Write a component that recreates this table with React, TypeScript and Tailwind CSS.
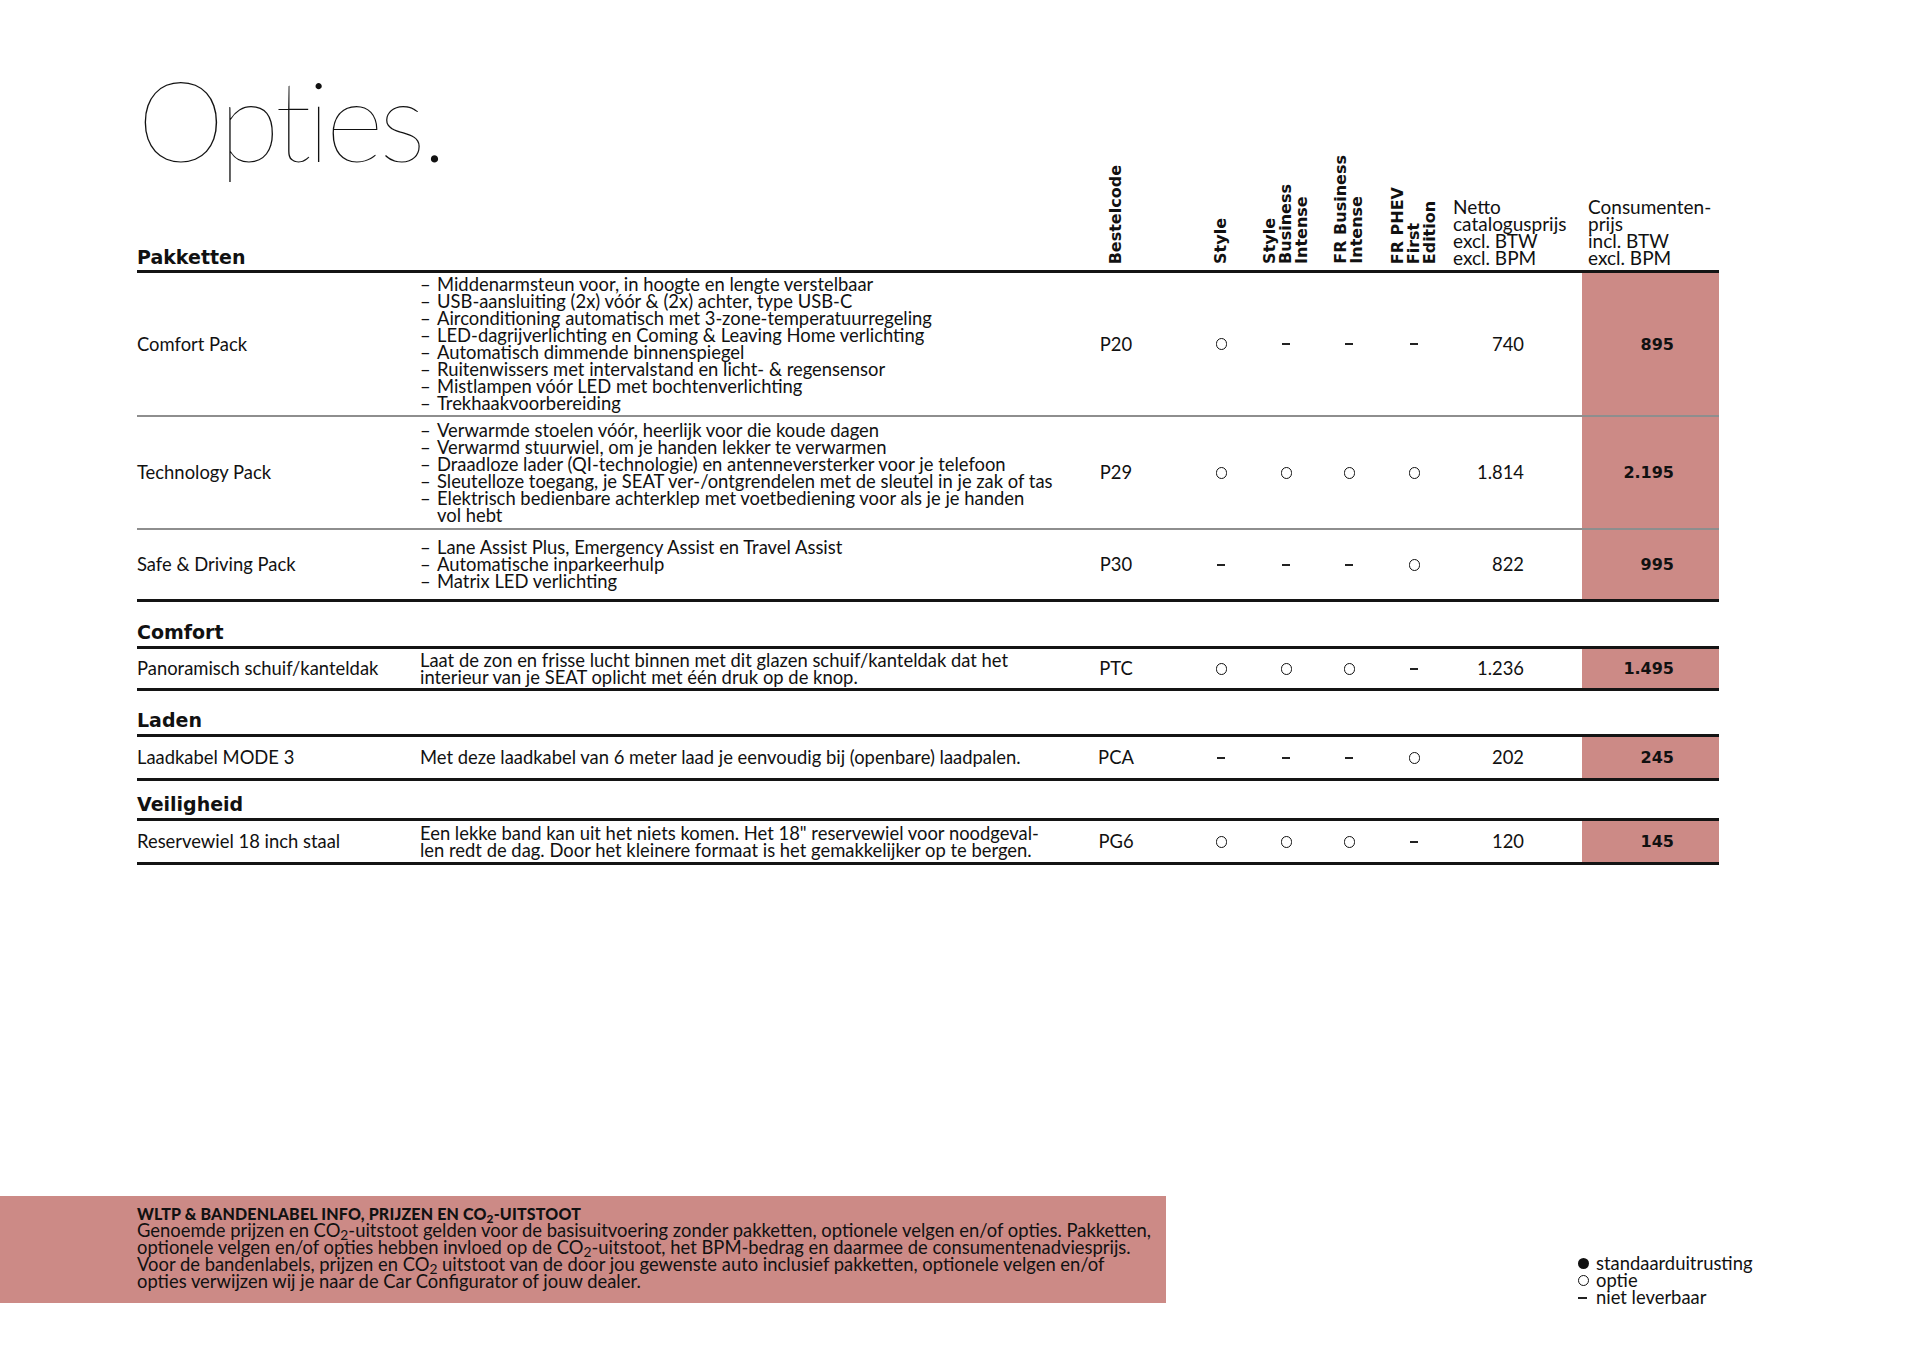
import React from "react";

type Mark = "o" | "-";

interface OptionRow {
  name: string;
  desc: React.ReactNode;
  bullets?: string[];
  code: string;
  marks: Mark[];
  netto: string;
  price: string;
  h: string;
}

interface Section {
  title: string;
  headH: string;
  rows: OptionRow[];
}

const cols = "grid grid-cols-[283px_636px_120px_90px_40px_86px_44px_146px_137px]";
const body = "font-['Lato',sans-serif] text-[18.4px] leading-[17px] text-[#111]";
const heavy = "font-['DejaVu_Sans',sans-serif] font-bold";

const pakketten: OptionRow[] = [
  {
    name: "Comfort Pack",
    desc: null,
    bullets: [
      "Middenarmsteun voor, in hoogte en lengte verstelbaar",
      "USB-aansluiting (2x) vóór & (2x) achter, type USB-C",
      "Airconditioning automatisch met 3-zone-temperatuurregeling",
      "LED-dagrijverlichting en Coming & Leaving Home verlichting",
      "Automatisch dimmende binnenspiegel",
      "Ruitenwissers met intervalstand en licht- & regensensor",
      "Mistlampen vóór LED met bochtenverlichting",
      "Trekhaakvoorbereiding",
    ],
    code: "P20",
    marks: ["o", "-", "-", "-"],
    netto: "740",
    price: "895",
    h: "h-[142px]",
  },
  {
    name: "Technology Pack",
    desc: null,
    bullets: [
      "Verwarmde stoelen vóór, heerlijk voor die koude dagen",
      "Verwarmd stuurwiel, om je handen lekker te verwarmen",
      "Draadloze lader (QI-technologie) en antenneversterker voor je telefoon",
      "Sleutelloze toegang, je SEAT ver-/ontgrendelen met de sleutel in je zak of tas",
      "Elektrisch bedienbare achterklep met voetbediening voor als je je handen\nvol hebt",
    ],
    code: "P29",
    marks: ["o", "o", "o", "o"],
    netto: "1.814",
    price: "2.195",
    h: "h-[111px]",
  },
  {
    name: "Safe & Driving Pack",
    desc: null,
    bullets: [
      "Lane Assist Plus, Emergency Assist en Travel Assist",
      "Automatische inparkeerhulp",
      "Matrix LED verlichting",
    ],
    code: "P30",
    marks: ["-", "-", "-", "o"],
    netto: "822",
    price: "995",
    h: "h-[69px]",
  },
];

const sections: Section[] = [
  {
    title: "Comfort",
    headH: "h-[44px]",
    rows: [
      {
        name: "Panoramisch schuif/kanteldak",
        desc: (
          <>
            Laat de zon en frisse lucht binnen met dit glazen schuif/kanteldak dat het
            <br />
            interieur van je SEAT oplicht met één druk op de knop.
          </>
        ),
        code: "PTC",
        marks: ["o", "o", "o", "-"],
        netto: "1.236",
        price: "1.495",
        h: "h-[39px]",
      },
    ],
  },
  {
    title: "Laden",
    headH: "h-[43px]",
    rows: [
      {
        name: "Laadkabel MODE 3",
        desc: "Met deze laadkabel van 6 meter laad je eenvoudig bij (openbare) laadpalen.",
        code: "PCA",
        marks: ["-", "-", "-", "o"],
        netto: "202",
        price: "245",
        h: "h-[41px]",
      },
    ],
  },
  {
    title: "Veiligheid",
    headH: "h-[37px]",
    rows: [
      {
        name: "Reservewiel 18 inch staal",
        desc: (
          <>
            Een lekke band kan uit het niets komen. Het 18" reservewiel voor noodgeval-
            <br />
            len redt de dag. Door het kleinere formaat is het gemakkelijker op te bergen.
          </>
        ),
        code: "PG6",
        marks: ["o", "o", "o", "-"],
        netto: "120",
        price: "145",
        h: "h-[41px]",
      },
    ],
  },
];

const Thick = () => <div className="h-[3px] w-full bg-[#141414]" />;
const Thin = () => <div className="h-[2px] w-full bg-[#8e8e8e]" />;

const MarkIcon = ({ m }: { m: Mark }) =>
  m === "o" ? (
    <span className="inline-block h-[12px] w-[11px] rounded-full border-[1.5px] border-[#111]" />
  ) : (
    <span className="inline-block h-[2px] w-[8px] bg-[#222]" />
  );

const Row = ({ row }: { row: OptionRow }) => (
  <div className={`${cols} ${row.h} ${body}`}>
    <div className="flex items-center whitespace-nowrap">{row.name}</div>
    <div className="flex items-center whitespace-nowrap">
      {row.bullets ? (
        <div className="flex flex-col">
          {row.bullets.map((b) => (
            <div key={b} className="flex">
              <span className="w-[17px] shrink-0">–</span>
              <span className="whitespace-pre">{b}</span>
            </div>
          ))}
        </div>
      ) : (
        <div>{row.desc}</div>
      )}
    </div>
    <div className="flex items-center justify-center">{row.code}</div>
    {row.marks.map((m, i) => (
      <div key={i} className="flex items-center justify-center">
        <MarkIcon m={m} />
      </div>
    ))}
    <div className="flex items-center justify-end pr-[58px]">{row.netto}</div>
    <div className={`flex items-center justify-end bg-[#cc8a86] pr-[45px] text-[16px] ${heavy}`}>
      {row.price}
    </div>
  </div>
);

const Vert = ({ children }: { children: React.ReactNode }) => (
  <div className="flex items-end justify-center pb-[6px]">
    <div className={`rotate-180 whitespace-nowrap text-[16px] leading-[16px] text-[#111] [writing-mode:vertical-rl] ${heavy}`}>
      {children}
    </div>
  </div>
);

export default function App() {
  return (
    <div className="flex h-[1358px] w-[1920px] flex-col bg-white">
      <div className="w-[1719px] pl-[137px] pt-[63px]">
        {/* kop */}
        <div className={cols}>
          <div className="col-span-2 flex flex-col">
            <div className="font-['Lato',sans-serif] text-[112px] font-thin leading-[112px] tracking-[-0.04em] text-[#111]">
              Opties.
            </div>
            <div className={`mt-[72px] pb-[3px] text-[19px] leading-[20px] text-[#111] ${heavy}`}>Pakketten</div>
          </div>
          <Vert>Bestelcode</Vert>
          <Vert>Style</Vert>
          <Vert>
            Style
            <br />
            Business
            <br />
            Intense
          </Vert>
          <Vert>
            FR Business
            <br />
            Intense
          </Vert>
          <Vert>
            FR PHEV
            <br />
            First
            <br />
            Edition
          </Vert>
          <div className="flex items-end pb-[4px] pl-[17px] font-['Lato',sans-serif] text-[19px] leading-[17px] text-[#111]">
            <div>
              Netto
              <br />
              catalogusprijs
              <br />
              excl. BTW
              <br />
              excl. BPM
            </div>
          </div>
          <div className="flex items-end pb-[4px] pl-[6px] font-['Lato',sans-serif] text-[19px] leading-[17px] text-[#111]">
            <div>
              Consumenten-
              <br />
              prijs
              <br />
              incl. BTW
              <br />
              excl. BPM
            </div>
          </div>
        </div>
        <Thick />
        {pakketten.map((r, i) => (
          <React.Fragment key={r.code}>
            <Row row={r} />
            {i < pakketten.length - 1 ? <Thin /> : <Thick />}
          </React.Fragment>
        ))}

        {sections.map((s) => (
          <div key={s.title}>
            <div className={`flex items-end pb-[4px] ${s.headH}`}>
              <div className={`text-[19px] leading-[20px] text-[#111] ${heavy}`}>{s.title}</div>
            </div>
            <Thick />
            {s.rows.map((r) => (
              <React.Fragment key={r.code}>
                <Row row={r} />
                <Thick />
              </React.Fragment>
            ))}
          </div>
        ))}
      </div>

      {/* voetnoot */}
      <div className="mb-[55px] mt-auto flex items-end">
        <div className="w-[1166px] shrink-0 bg-[#cc8a86] pb-[13px] pl-[137px] pt-[9px] text-[#111]">
          <div className="font-['Lato',sans-serif] text-[16px] font-black leading-[17px] tracking-[0.01em]">
            WLTP &amp; BANDENLABEL INFO, PRIJZEN EN CO<sub>2</sub>-UITSTOOT
          </div>
          <div className={`whitespace-nowrap ${body}`}>
            Genoemde prijzen en CO<sub>2</sub>-uitstoot gelden voor de basisuitvoering zonder pakketten, optionele velgen en/of opties. Pakketten,
            <br />
            optionele velgen en/of opties hebben invloed op de CO<sub>2</sub>-uitstoot, het BPM-bedrag en daarmee de consumentenadviesprijs.
            <br />
            Voor de bandenlabels, prijzen en CO<sub>2</sub> uitstoot van de door jou gewenste auto inclusief pakketten, optionele velgen en/of
            <br />
            opties verwijzen wij je naar de Car Configurator of jouw dealer.
          </div>
        </div>
        <div className={`ml-[412px] mb-[-3px] flex flex-col ${body}`}>
          <div className="flex items-center">
            <span className="flex w-[18px] items-center">
              <span className="inline-block h-[11px] w-[11px] rounded-full bg-[#111]" />
            </span>
            standaarduitrusting
          </div>
          <div className="flex items-center">
            <span className="flex w-[18px] items-center">
              <span className="inline-block h-[11px] w-[11px] rounded-full border-[1.5px] border-[#111]" />
            </span>
            optie
          </div>
          <div className="flex items-center">
            <span className="flex w-[18px] items-center">
              <span className="inline-block h-[2px] w-[9px] bg-[#222]" />
            </span>
            niet leverbaar
          </div>
        </div>
      </div>
    </div>
  );
}
